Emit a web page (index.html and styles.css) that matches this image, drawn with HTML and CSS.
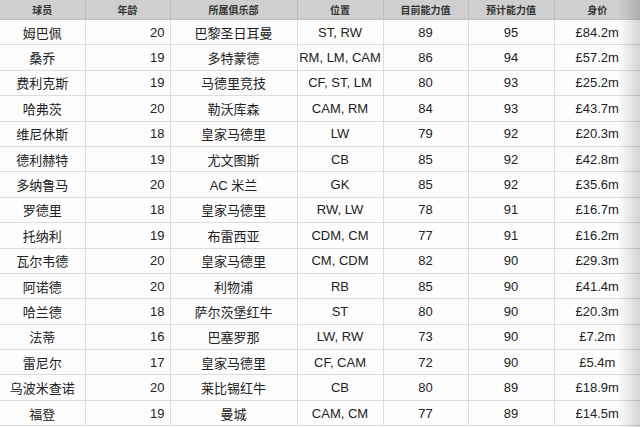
FILE: index.html
```html
<!DOCTYPE html>
<html lang="zh">
<head>
<meta charset="utf-8">
<link rel="stylesheet" href="styles.css">
</head>
<body>
<div class="wrap">
<table class="tbl">
<colgroup>
<col class="c1"><col class="c2"><col class="c3"><col class="c4"><col class="c5"><col class="c6"><col class="c7">
</colgroup>
<thead>
<tr><th>球员</th><th>年龄</th><th>所属俱乐部</th><th>位置</th><th>目前能力值</th><th>预计能力值</th><th>身价</th></tr>
</thead>
<tbody>
<tr><td>姆巴佩</td><td class="num">20</td><td>巴黎圣日耳曼</td><td>ST, RW</td><td>89</td><td>95</td><td>£84.2m</td></tr>
<tr><td>桑乔</td><td class="num">19</td><td>多特蒙德</td><td>RM, LM, CAM</td><td>86</td><td>94</td><td>£57.2m</td></tr>
<tr><td>费利克斯</td><td class="num">19</td><td>马德里竞技</td><td>CF, ST, LM</td><td>80</td><td>93</td><td>£25.2m</td></tr>
<tr><td>哈弗茨</td><td class="num">20</td><td>勒沃库森</td><td>CAM, RM</td><td>84</td><td>93</td><td>£43.7m</td></tr>
<tr><td>维尼休斯</td><td class="num">18</td><td>皇家马德里</td><td>LW</td><td>79</td><td>92</td><td>£20.3m</td></tr>
<tr><td>德利赫特</td><td class="num">19</td><td>尤文图斯</td><td>CB</td><td>85</td><td>92</td><td>£42.8m</td></tr>
<tr><td>多纳鲁马</td><td class="num">20</td><td>AC 米兰</td><td>GK</td><td>85</td><td>92</td><td>£35.6m</td></tr>
<tr><td>罗德里</td><td class="num">18</td><td>皇家马德里</td><td>RW, LW</td><td>78</td><td>91</td><td>£16.7m</td></tr>
<tr><td>托纳利</td><td class="num">19</td><td>布雷西亚</td><td>CDM, CM</td><td>77</td><td>91</td><td>£16.2m</td></tr>
<tr><td>瓦尔韦德</td><td class="num">20</td><td>皇家马德里</td><td>CM, CDM</td><td>82</td><td>90</td><td>£29.3m</td></tr>
<tr><td>阿诺德</td><td class="num">20</td><td>利物浦</td><td>RB</td><td>85</td><td>90</td><td>£41.4m</td></tr>
<tr><td>哈兰德</td><td class="num">18</td><td>萨尔茨堡红牛</td><td>ST</td><td>80</td><td>90</td><td>£20.3m</td></tr>
<tr><td>法蒂</td><td class="num">16</td><td>巴塞罗那</td><td>LW, RW</td><td>73</td><td>90</td><td>£7.2m</td></tr>
<tr><td>雷尼尔</td><td class="num">17</td><td>皇家马德里</td><td>CF, CAM</td><td>72</td><td>90</td><td>£5.4m</td></tr>
<tr><td>乌波米查诺</td><td class="num">20</td><td>莱比锡红牛</td><td>CB</td><td>80</td><td>89</td><td>£18.9m</td></tr>
<tr><td>福登</td><td class="num">19</td><td>曼城</td><td>CAM, CM</td><td>77</td><td>89</td><td>£14.5m</td></tr>
</tbody>
</table>
<div class="shade"></div>
</div>
</body>
</html>
```
FILE: styles.css
```css
html, body {
  margin: 0;
  padding: 0;
  background: #ffffff;
}
.wrap {
  position: relative;
  width: 640px;
  height: 427px;
  overflow: hidden;
  background: #fdfdfd;
}
.tbl {
  width: 640px;
  border-collapse: collapse;
  table-layout: fixed;
  font-family: "Liberation Sans", "Noto Sans CJK SC", sans-serif;
  color: #222222;
}
.c1 { width: 85px; }
.c2 { width: 85px; }
.c3 { width: 127px; }
.c4 { width: 86px; }
.c5 { width: 85px; }
.c6 { width: 86px; }
.c7 { width: 86px; }
.tbl th {
  height: 19px;
  padding: 0;
  background: #cfcfcf;
  font-size: 10px;
  font-weight: bold;
  color: #333333;
  text-align: center;
  border-left: 1px solid #bdbdbd;
  border-bottom: 1px solid #c4c4c4;
}
.tbl td {
  height: 24.4px;
  padding: 0;
  font-size: 13px;
  text-align: center;
  border-left: 1px solid #dcdcdc;
  border-bottom: 1px solid #dcdcdc;
}
.tbl th:first-child, .tbl td:first-child {
  border-left: none;
}
.tbl td.num {
  text-align: right;
  padding-right: 5px;
}
.shade {
  position: absolute;
  top: 0;
  right: 0;
  width: 22px;
  height: 427px;
  background: linear-gradient(to right, rgba(0,0,0,0), rgba(0,0,0,0.16));
  pointer-events: none;
}
```
